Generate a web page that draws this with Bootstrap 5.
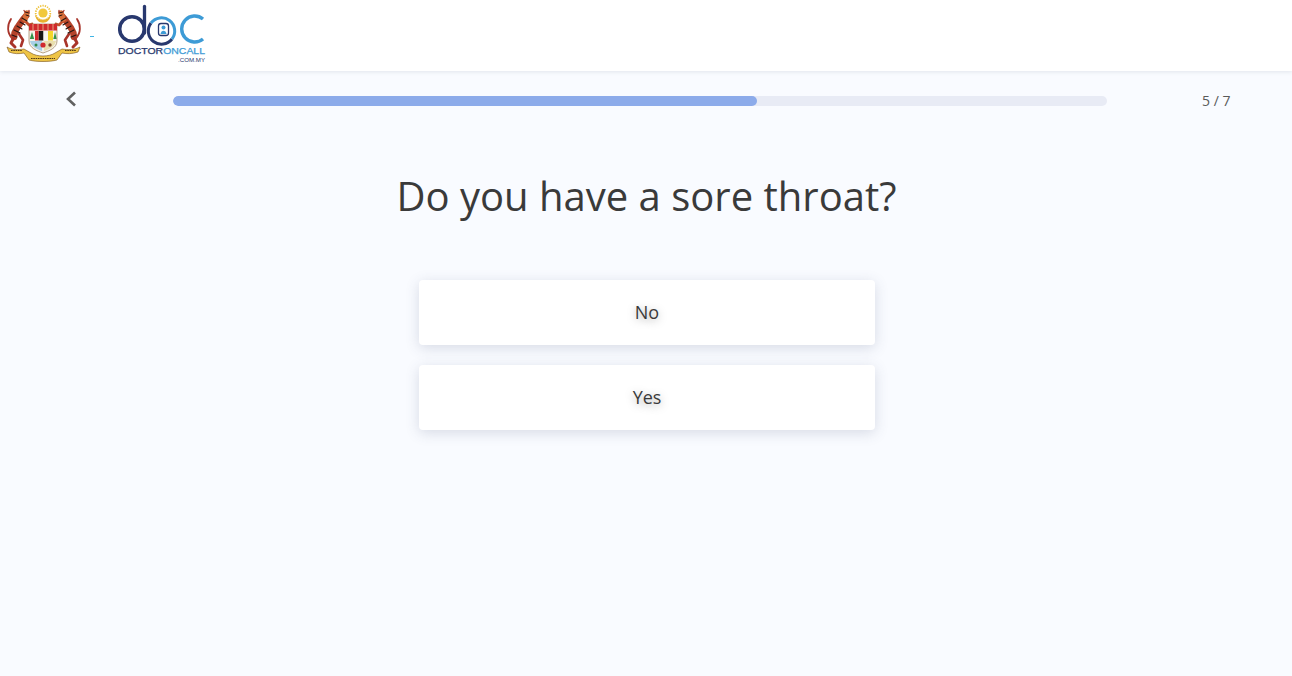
<!DOCTYPE html>
<html lang="en">
<head>
  <meta charset="UTF-8" />
  <meta name="viewport" content="width=device-width, initial-scale=1" />
  <title>Symptom check</title>
  <link href="https://cdn.jsdelivr.net/npm/bootstrap@5.3.3/dist/css/bootstrap.min.css" rel="stylesheet" />
  <style>
    body { background-color: #f9fbff; font-family: "Open Sans", sans-serif; color: #3a3a3a; min-height: 676px; }
    .top-bar { height: 71px; background: #fff; box-shadow: 0 1px 4px rgba(60, 70, 100, .12); padding-left: 6px; }
    .crest { width: 76px; height: 58px; margin-top: 4px; }
    .logo-dash { width: 4px; height: 1px; background: #3fb4e5; margin: 2px 24px 0 8px; }
    .doc-logo { width: 90px; height: 60px; margin-top: 3px; }
    .step-row { height: 60px; }
    .back-col { width: 173px; padding-left: 64px; padding-bottom: 5px; }
    .step-bar { width: 934px; height: 10px; background: #e8ebf5; border-radius: 5px; }
    .step-bar .progress-bar { background: #8cabea; border-radius: 5px; }
    .step-label { width: 185px; padding-left: 95px; padding-bottom: 1px; font-size: 14px; color: #5a5a5a; letter-spacing: .05px; }
    .question { font-size: 40px; font-weight: 400; line-height: 56px; color: #3a3a3a; margin: 37px 0 56px 1px; }
    .answers { width: 456px; margin-left: 419px; gap: 20px; }
    .answer-btn { height: 65px; background: #fff; border: 0; border-radius: 4px; font-size: 18px; color: #3a3a3a; text-shadow: 0 2px 8px rgba(0, 0, 0, .35); box-shadow: 0 3px 14px rgba(60, 70, 110, .18); }
  </style>
</head>
<body>
  <header class="top-bar d-flex align-items-start">
    <svg class="crest" viewBox="0 0 76 58" aria-label="Malaysia coat of arms">
      <g transform="translate(-6,-4)">
        <g id="tiger" fill="none" stroke-linecap="round" stroke-linejoin="round">
          <!-- tail, body, legs -->
          <path d="M12 38 C7 33 7 25 11 19" stroke="#a8342a" stroke-width="1.800"/>
          <path d="M26 16 C22 20 20 24 17 28 C15 31 14 34 14 37" stroke="#b5432a" stroke-width="6.500"/>
          <path d="M14 37 L11 43 L15 47" stroke="#a8342a" stroke-width="3"/>
          <path d="M19 34 L23 40 L21 46" stroke="#a8342a" stroke-width="2.600"/>
          <path d="M24 20 L29 25 L32 24" stroke="#c4502c" stroke-width="2.800"/>
          <path d="M27 13 L25 19" stroke="#d8703a" stroke-width="5.500"/>
          <!-- stripes -->
          <path d="M22 18 L27 21 M20 22 L25 25 M17 26 L22 29 M14 30 L20 33 M12 35 L17 37" stroke="#231512" stroke-width="1.100"/>
          <path d="M25 12 L29 13 M26 15 L29 16" stroke="#231512" stroke-width="1"/>
          <path d="M24 10.500 L25 12 M29 10.500 L29 12" stroke="#a8342a" stroke-width="1.300"/>
        </g>
        <use href="#tiger" transform="translate(88,0) scale(-1,1)"/>
        <!-- sun and crescent -->
        <circle cx="43" cy="13" r="7.300" fill="none" stroke="#eec23c" stroke-width="1.800" stroke-dasharray="1.300 1.100"/>
        <circle cx="43" cy="13" r="4.600" fill="#f1c83e"/>
        <path d="M35 13 C35 26 51 26 51 13 C50 22 36 22 35 13 Z" fill="#e7b02e"/>
        <!-- shield -->
        <path d="M29 24 H57 V41 C57 48 49 51 43 53 C37 51 29 48 29 41 Z" fill="#f5f2ea" stroke="#8c6a3c" stroke-width=".6"/>
        <path d="M29 24 H57 V30.500 H29 Z" fill="#d02a2e"/>
        <path d="M33 24 V30.500 M38 24 V30.500 M43 24 V30.500 M48 24 V30.500 M53 24 V30.500" stroke="#f2d9a0" stroke-width=".7"/>
        <rect x="38.500" y="31" width="5" height="9.500" fill="#161616"/>
        <rect x="43.500" y="31" width="4.500" height="9.500" fill="#f6f6f2"/>
        <rect x="48" y="31" width="5" height="9.500" fill="#f3d62c"/>
        <rect x="35" y="31" width="3.500" height="9.500" fill="#d02a2e"/>
        <path d="M32 32 L29.800 39 H34.200 Z M55 32 L53.300 39 H56.700 Z" fill="#34934a"/>
        <path d="M30 41 H42 V51 C36 49 31 46 30 41 Z" fill="#a8cfe6"/>
        <path d="M44 41 H56 C55 46 50 49 44 51 Z" fill="#e9dfae"/>
        <circle cx="43" cy="45" r="2.600" fill="#d02a2e"/>
        <circle cx="36" cy="45" r="1.500" fill="#2f8a4a"/>
        <circle cx="50" cy="45" r="1.700" fill="#7a4a2c"/>
        <!-- ribbon -->
        <path d="M7 47 C12 50 18 50 24 49 L31 53 C37 57 49 57 55 53 L62 49 C68 50 74 50 80 47 L78 52 C72 54 67 54 62 53 L57 60 C50 62 36 62 29 60 L24 53 C19 54 14 54 9 52 Z" fill="#eec445" stroke="#77501c" stroke-width=".6"/>
        <path d="M31 58.500 H55 M11 50.500 H22 M65 50.500 H76" stroke="#3e2810" stroke-width=".9" stroke-dasharray="1.600 .7"/>
      </g>
    </svg>
    <span class="logo-dash align-self-center"></span>
    <svg class="doc-logo" viewBox="0 0 90 60" aria-label="DoctorOnCall logo">
      <circle cx="14" cy="26" r="12.300" fill="none" stroke="#28386e" stroke-width="3.500"/>
      <path d="M26.500 3.500 V30" stroke="#28386e" stroke-width="3.300" stroke-linecap="round" fill="none"/>
      <path d="M33 20 A12.500 12.500 0 0 0 54 36" fill="none" stroke="#28386e" stroke-width="3"/>
      <path d="M33 20 A12.500 12.500 0 0 1 54 36" fill="none" stroke="#3d9bd6" stroke-width="3"/>
      <path d="M85 16 A13 13 0 1 0 85 36" fill="none" stroke="#3d9bd6" stroke-width="3.400"/>
      <rect x="40.500" y="20.500" width="10" height="12" rx="2.500" fill="none" stroke="#28386e" stroke-width="1.300"/>
      <circle cx="45.500" cy="24.500" r="2" fill="#3d9bd6"/>
      <path d="M42.500 31 C43 26.500 48 26.500 48.500 31 Z" fill="#3d9bd6"/>
      <text x="0" y="50.500" font-family="Liberation Sans, sans-serif" font-size="9" stroke-width=".25" textLength="87" lengthAdjust="spacingAndGlyphs"><tspan fill="#28386e" stroke="#28386e">DOCTOR</tspan><tspan fill="#3d9bd6" stroke="#3d9bd6">ONCALL</tspan></text>
      <text x="60" y="58.500" font-family="Liberation Sans, sans-serif" font-size="6" fill="#28386e" textLength="27" lengthAdjust="spacingAndGlyphs">.COM.MY</text>
    </svg>
  </header>

  <div class="step-row d-flex align-items-center">
    <div class="back-col">
      <svg width="14" height="18" viewBox="0 0 14 18" class="d-block" aria-label="Back"><path d="M11 2.500 L4 9 L11 15.500" fill="none" stroke="#616161" stroke-width="2.600"/></svg>
    </div>
    <div class="progress step-bar">
      <div class="progress-bar" role="progressbar" style="width: 62.5%"></div>
    </div>
    <div class="step-label">5 / 7</div>
  </div>

  <h1 class="question text-center">Do you have a sore throat?</h1>

  <div class="answers d-flex flex-column">
    <button type="button" class="btn answer-btn">No</button>
    <button type="button" class="btn answer-btn">Yes</button>
  </div>

  <script src="https://cdn.jsdelivr.net/npm/bootstrap@5.3.3/dist/js/bootstrap.bundle.min.js"></script>
</body>
</html>
